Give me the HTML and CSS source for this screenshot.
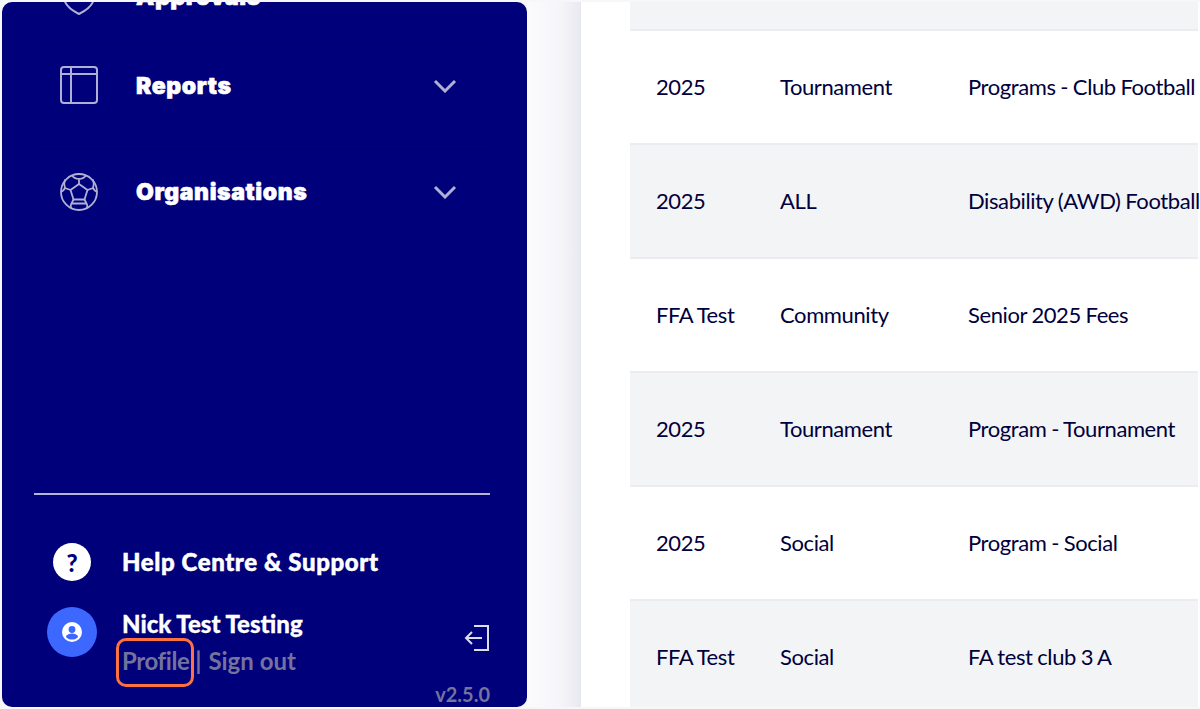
FILE: index.html
```html
<!DOCTYPE html>
<html lang="en">
<head>
    <meta charset="UTF-8">
    <title>Reports</title>
    <link rel="stylesheet" href="styles.css">
</head>
<body>

<div class="window">
    <aside class="sidebar">
        <nav class="nav">
            <div class="nav-item nav-item-first">
                <svg class="nav-icon" viewBox="0 0 38 38" fill="none" stroke="currentColor" stroke-width="2" stroke-linejoin="round">
                    <path d="M19 2l15 5v12c0 8-7 13-15 17C11 32 4 27 4 19V7z"/>
                    <path d="M13 17l4 4 8-8"/>
                </svg>
                <span class="nav-label">Approvals</span>
            </div>
            <div class="nav-item">
                <svg class="nav-icon" viewBox="0 0 38 38" fill="none" stroke="currentColor" stroke-width="2" stroke-linejoin="round">
                    <rect x="1" y="1" width="36" height="36" rx="3"/>
                    <path d="M1 8h36M11 1v36"/>
                </svg>
                <span class="nav-label">Reports</span>
                <svg class="chevron" viewBox="0 0 24 14" fill="none" stroke="currentColor" stroke-width="3"><path d="M2 2l10 10L22 2"/></svg>
            </div>
            <div class="nav-item">
                <svg class="nav-icon" viewBox="0 0 38 38" fill="none" stroke="currentColor" stroke-width="1.800" stroke-linejoin="round">
                    <circle cx="19" cy="19" r="18"/>
                    <path d="M19 11l8.500 6-3 9.500h-11l-3-9.500z"/>
                    <path d="M19 11V6M12 2.500C14 5 16.500 6 19 6s5-1 7-3.500"/>
                    <path d="M27.500 17L33 15M33 6.500c1 3 1 6 0 8.500 1 2 2 3 4 4"/>
                    <path d="M10.500 17L5 15M5 6.500c-1 3-1 6 0 8.500-1 2-2 3-4 4"/>
                    <path d="M24.500 26.500l2 4M13.500 26.500l-2 4"/>
                    <path d="M12 30.500h14c1 0 2 3 .5 5M12 30.500c-1 0-2 3-.5 5"/>
                </svg>
                <span class="nav-label">Organisations</span>
                <svg class="chevron" viewBox="0 0 24 14" fill="none" stroke="currentColor" stroke-width="3"><path d="M2 2l10 10L22 2"/></svg>
            </div>
        </nav>

        <div class="sidebar-foot">
            <div class="help">
                <span class="help-icon">?</span>
                <span class="help-label">Help Centre &amp; Support</span>
            </div>
            <div class="user">
                <span class="avatar">
                    <svg viewBox="0 0 20 20" width="20" height="20">
                        <circle cx="10" cy="10" r="10" fill="#fff"/>
                        <circle cx="10" cy="7.500" r="3.400" fill="#3d68ff"/>
                        <path d="M3.800 15c1.200-2.400 3.400-3.400 6.200-3.400s5 1 6.200 3.400c-1.500 1.600-3.700 2.600-6.200 2.600S5.300 16.600 3.800 15z" fill="#3d68ff"/>
                    </svg>
                </span>
                <div class="user-text">
                    <div class="user-name">Nick Test Testing</div>
                    <div class="user-links">
                        <span class="profile-link">Profile<span class="highlight"></span></span>
                        <span class="sep">|</span>
                        <span>Sign out</span>
                    </div>
                </div>
                <svg class="logout" viewBox="0 0 26 26" fill="none" stroke="currentColor" stroke-width="2">
                    <path d="M10 1h14v24H10"/>
                    <path d="M18 13H2M8 7l-6 6 6 6"/>
                </svg>
            </div>
            <div class="version">v2.5.0</div>
        </div>
    </aside>

    <div class="gutter"></div>

    <main class="panel">
        <div class="rows">
            <div class="row row-top"></div>
            <div class="row">
                <span>2025</span><span>Tournament</span><span>Programs - Club Football</span>
            </div>
            <div class="row alt">
                <span>2025</span><span>ALL</span><span>Disability (AWD) Football</span>
            </div>
            <div class="row">
                <span>FFA Test</span><span>Community</span><span>Senior 2025 Fees</span>
            </div>
            <div class="row alt">
                <span>2025</span><span>Tournament</span><span>Program - Tournament</span>
            </div>
            <div class="row">
                <span>2025</span><span>Social</span><span>Program - Social</span>
            </div>
            <div class="row alt">
                <span>FFA Test</span><span>Social</span><span>FA test club 3 A</span>
            </div>
        </div>
    </main>
</div>

</body>
</html>
```

FILE: styles.css
```css
html, body {
    height: 100%;
}
body {
    margin: 0;
    background-color: #f7f7fa;
    font-family: Lato, "Noto Sans", sans-serif;
    overflow: hidden;
}
.window {
    display: flex;
    box-sizing: border-box;
    height: 709px;
    padding: 2px 0 2px 2px;
}

/* sidebar */
.sidebar {
    display: flex;
    flex-direction: column;
    justify-content: space-between;
    width: 525px;
    flex-shrink: 0;
    background-color: #00007a;
    border-radius: 10px;
    overflow: hidden;
    color: #fff;
    box-sizing: border-box;
    padding: 0 37px 0 32px;
}
.nav {
    margin-top: -64px;
}
.nav-item {
    display: flex;
    align-items: center;
    box-sizing: border-box;
    height: 106px;
    border-bottom: 1px solid #000066;
}
.nav-item:last-child {
    border-bottom: none;
}
.nav-icon {
    width: 38px;
    height: 38px;
    margin-left: 26px;
    margin-top: -23px;
    color: #b0b0d4;
}
.nav-label {
    margin-left: 38px;
    margin-top: -22px;
    font-family: Inter, Lato, sans-serif;
    font-size: 23px;
    font-weight: 900;
    letter-spacing: 0.6px;
    -webkit-text-stroke: 0.6px #fff;
}
.nav-item-first .nav-icon,
.nav-item-first .nav-label {
    margin-top: 12px;
}
.chevron {
    width: 24px;
    height: 14px;
    margin-left: auto;
    margin-right: 33px;
    margin-top: -22px;
    color: #b0b0d4;
}

.sidebar-foot {
    position: relative;
    border-top: 2px solid #b4b4d4;
    height: 214px;
    box-sizing: border-box;
}
.help {
    display: flex;
    align-items: center;
    margin-top: 48px;
    margin-left: 19px;
}
.help-icon {
    display: flex;
    align-items: center;
    justify-content: center;
    width: 38px;
    height: 38px;
    border-radius: 50%;
    background: #fff;
    color: #00007a;
    font-size: 24px;
    font-weight: 900;
}
.help-label {
    margin-left: 31px;
    margin-top: -2px;
    font-size: 24px;
    font-weight: 900;
    letter-spacing: 0.6px;
    -webkit-text-stroke: 0.5px #fff;
}
.user {
    display: flex;
    margin-top: 26px;
    margin-left: 13px;
}
.avatar {
    display: flex;
    align-items: center;
    justify-content: center;
    width: 50px;
    height: 50px;
    border-radius: 50%;
    background: #3d68ff;
    flex-shrink: 0;
}
.user-text {
    margin-left: 25px;
    margin-top: 2px;
}
.user-name {
    font-size: 24px;
    font-weight: 900;
    line-height: 30px;
    -webkit-text-stroke: 0.3px #fff;
}
.user-links {
    margin-top: 7px;
    font-size: 24px;
    font-weight: 700;
    line-height: 30px;
    color: #73739c;
}
.sep {
    margin: 0 1px 0 0;
}
.profile-link {
    position: relative;
    letter-spacing: -0.4px;
}
.highlight {
    position: absolute;
    left: -6px;
    top: -8px;
    width: 72px;
    height: 43px;
    border: 3px solid #ff7043;
    border-radius: 10px;
}
.logout {
    width: 26px;
    height: 26px;
    margin-left: auto;
    margin-top: 18px;
    color: #dcdcec;
}
.version {
    position: absolute;
    right: 0;
    bottom: 1px;
    font-size: 20px;
    font-weight: 700;
    color: #73739c;
}

/* right side */
.gutter {
    width: 53px;
    flex-shrink: 0;
    background: linear-gradient(to right, #fbfbfd, #f6f6fa 60%, #e9e9f1);
}
.panel {
    flex: 1;
    background: #fff;
    border-left: 1px solid #e6e6ee;
    padding-left: 49px;
    overflow: hidden;
}
.rows {
    margin-right: 2px;
}
.row {
    display: grid;
    grid-template-columns: 124px 188px 1fr;
    align-items: center;
    box-sizing: border-box;
    height: 114px;
    padding-left: 26px;
    padding-bottom: 2px;
    border-top: 2px solid #ececf0;
    background: #fff;
    color: #00003c;
    font-size: 22px;
    white-space: nowrap;
    letter-spacing: -0.4px;
    word-spacing: -0.5px;
}
.row.alt {
    background: #f3f4f6;
}
.row-top {
    height: 27px;
    border-top: none;
    background: #f3f4f6;
}
```
